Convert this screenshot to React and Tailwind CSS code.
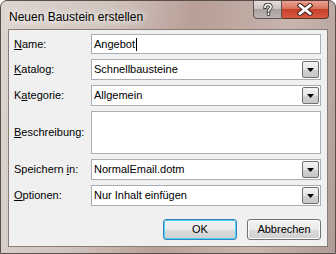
import React from "react";

const font = { fontFamily: '"Liberation Sans", Arial, sans-serif' };

const Label = ({ before, u, after }) => (
  <span className="text-[11px] text-black">
    {before}
    <span className="underline underline-offset-[1px]">{u}</span>
    {after}
  </span>
);

const DropButton = () => (
  <div className="w-[17px] m-[1px] border border-[#707070] rounded-[2px] bg-[linear-gradient(#f4f4f4,#e6e6e6_50%,#d0d0d0_51%,#c8c8c8)] flex items-center justify-center">
    <svg width="7" height="4" viewBox="0 0 7 4">
      <path d="M0 0h7L3.5 4z" fill="#000" />
    </svg>
  </div>
);

const Combo = ({ value }) => (
  <div className="h-[21px] flex border border-[#abadb3] bg-white">
    <span className="flex-1 flex items-center pl-[2px] text-[11px] text-black">{value}</span>
    <DropButton />
  </div>
);

const TextBox = ({ value, caret }) => (
  <div className="h-[20px] flex items-center border border-[#abadb3] bg-white pl-[2px] text-[11px] text-black">
    {value}
    {caret && <span className="w-px h-[13px] bg-black ml-[1px]" />}
  </div>
);

export default function App() {
  return (
    <div
      style={font}
      className="w-[336px] h-[254px] flex flex-col rounded-t-[7px] border border-[#5a4e4a] bg-[linear-gradient(100deg,#ddd5d0_0%,#d0c3bc_30%,#b89f97_52%,#c7b5ae_78%,#b09c96_100%)] px-[7px] pb-[6px]"
    >
      <div className="h-[28px] flex justify-between">
        <div className="pt-[7px] pl-[1px] text-[12px] text-black [text-shadow:0_0_6px_#fff,0_0_10px_#fff]">
          Neuen Baustein erstellen
        </div>
        <div className="flex h-[19px] -mt-px -mr-px">
          <div className="w-[29px] rounded-bl-[4px] border border-[#5d5452] bg-[linear-gradient(#e3dedd,#c9c2c0_45%,#a9a09d_50%,#bdb5b3)] flex items-center justify-center">
            <svg width="10" height="13" viewBox="0 0 10 13">
              <path
                d="M2 4.2C2 2.3 3.3 1.5 5 1.5S8 2.4 8 4c0 1.3-.8 1.9-1.6 2.4-.6.4-.9.7-.9 1.6M5.5 10.5v.6"
                fill="none"
                stroke="#3d3a39"
                strokeWidth="3.4"
                strokeLinecap="square"
              />
              <path
                d="M2 4.2C2 2.3 3.3 1.5 5 1.5S8 2.4 8 4c0 1.3-.8 1.9-1.6 2.4-.6.4-.9.7-.9 1.6M5.5 10.5v.6"
                fill="none"
                stroke="#fff"
                strokeWidth="1.6"
                strokeLinecap="square"
              />
            </svg>
          </div>
          <div className="w-[47px] rounded-br-[4px] border border-l-0 border-[#5d3530] bg-[linear-gradient(#e8a393,#d9735e_45%,#c7412a_50%,#d65a3f)] flex items-center justify-center">
            <svg width="16" height="13" viewBox="0 0 16 13">
              <path d="M3 2.5l10 8M13 2.5l-10 8" stroke="#4a2520" strokeWidth="5" strokeLinecap="square" />
              <path d="M3 2.5l10 8M13 2.5l-10 8" stroke="#fff" strokeWidth="2.8" strokeLinecap="square" />
            </svg>
          </div>
        </div>
      </div>

      <div className="flex-1 bg-[#f0f0f0] border border-[#8a7d78] pl-[5px] pr-[6px] pt-[4px] flex flex-col">
        <div className="grid grid-cols-[77px_1fr] items-center gap-y-[5px]">
          <Label u="N" after="ame:" />
          <TextBox value="Angebot" caret />

          <Label u="K" after="atalog:" />
          <Combo value="Schnellbausteine" />

          <Label before="K" u="a" after="tegorie:" />
          <Combo value="Allgemein" />

          <Label u="B" after="eschreibung:" />
          <div className="h-[43px] border border-[#abadb3] bg-white" />

          <Label before="Speichern " u="i" after="n:" />
          <Combo value="NormalEmail.dotm" />

          <Label u="O" after="ptionen:" />
          <Combo value="Nur Inhalt einfügen" />
        </div>

        <div className="flex justify-end gap-[10px] mt-[13px]">
          <button className="w-[74px] h-[21px] rounded-[3px] border border-[#3c7fb1] shadow-[inset_0_0_0_1px_#48d5fb] bg-[linear-gradient(#f2f2f2,#ebebeb_50%,#dddddd_51%,#cfcfcf)] text-[11px] text-black">
            OK
          </button>
          <button className="w-[74px] h-[21px] rounded-[3px] border border-[#707070] shadow-[inset_0_0_0_1px_#fcfcfc] bg-[linear-gradient(#f2f2f2,#ebebeb_50%,#dddddd_51%,#cfcfcf)] text-[11px] text-black">
            Abbrechen
          </button>
        </div>
      </div>
    </div>
  );
}
